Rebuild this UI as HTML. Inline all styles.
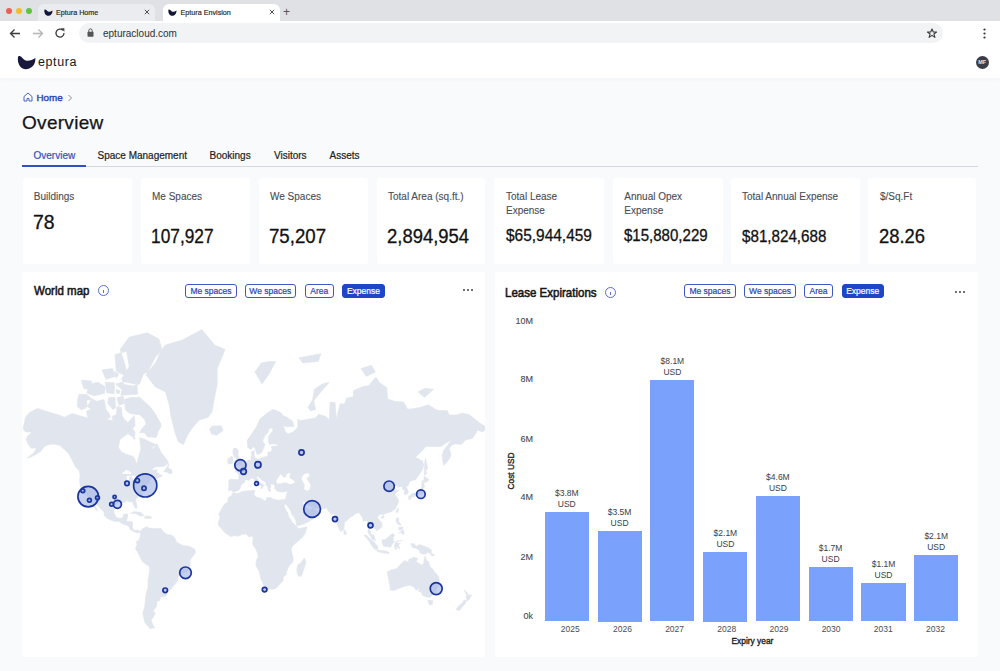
<!DOCTYPE html>
<html><head><meta charset="utf-8"><style>
*{margin:0;padding:0;box-sizing:border-box}
html,body{width:1000px;height:671px;overflow:hidden;background:#f9fafc;font-family:"Liberation Sans",sans-serif;color:#1b1b1f}
.a{position:absolute;white-space:nowrap;transform-origin:0 0}
#strip{position:absolute;left:0;top:0;width:1000px;height:21px;background:#dfe1e5}
.dot{position:absolute;top:8px;width:6.2px;height:6.2px;border-radius:50%}
.tab{position:absolute;top:4px;height:17px;border-radius:6px 6px 0 0}
.tabt{position:absolute;top:4px;font-size:7.5px;color:#1f1f22;-webkit-text-stroke:0.15px #1f1f22}
.x{position:absolute;top:2px;font-size:9px;color:#444}
#tool{position:absolute;left:0;top:21px;width:1000px;height:23px;background:#fff}
#omni{position:absolute;left:79px;top:23px;width:864px;height:20px;border-radius:10px;background:#f1f3f4}
#hdr{position:absolute;left:0;top:44px;width:1000px;height:34px;background:#fff;box-shadow:0 2px 5px rgba(0,0,0,0.02)}
.card{position:absolute;top:178px;height:86px;background:#fff;border-radius:3px}
.panel{position:absolute;top:272px;height:385px;background:#fff;border-radius:3px}
.info{position:absolute;width:11px;height:11px;border:1px solid #5a70c9;border-radius:50%}
.info:after{content:"";position:absolute;left:4px;top:4px;width:1px;height:3px;background:#5a70c9}
.btn{position:absolute;top:284px;height:14px;border:1px solid #3d58c2;border-radius:3px;font-size:8.5px;line-height:12px;color:#2a44b3;text-align:center;white-space:nowrap;-webkit-text-stroke:0.2px #2a44b3}
.btn.on{background:#1e46c6;border-color:#1e46c6;color:#fff;-webkit-text-stroke:0.2px #fff}
.more{position:absolute;font-size:10px;color:#333;letter-spacing:0.5px}
.bar{position:absolute;background:#7aa1fb}
.dl{position:absolute;width:60px;text-align:center;font-size:8.5px;line-height:11px;color:#3a3d45}
.yr{position:absolute;width:40px;text-align:center;font-size:8.5px;color:#4a4d55}
.tk{position:absolute;left:503px;width:30px;text-align:right;font-size:9px;color:#44474f;-webkit-text-stroke:0.1px #44474f}
</style></head><body>
<div id="strip"></div>
<div class="dot" style="left:6.1px;background:#ec5f57"></div>
<div class="dot" style="left:15.9px;background:#f2bc2f"></div>
<div class="dot" style="left:25.9px;background:#5fc43f"></div>
<div class="tab" style="left:38px;width:117px;background:#eaecef"></div>
<div class="tab" style="left:163px;width:117px;background:#fff"></div>
<svg class="a" style="left:44px;top:8.5px" width="9" height="7" viewBox="0 0 9 7"><path d="M0.4,0.9C0.7,0.2 1.6,0.3 2.3,1.1C3,1.9 3.7,2.6 4.6,2.7C6,2.8 7.3,2.1 8.5,1.4C8.7,4.4 6.7,6.7 4.1,6.7C1.8,6.7 0,4.2 0.4,0.9Z" fill="#14163a"/></svg>
<div class="tabt" style="left:56px;top:8px;font-size:7.2px">Eptura Home</div>
<svg class="a" style="left:144px;top:9px" width="6" height="6" viewBox="0 0 6 6"><path d="M0.8,0.8L5.2,5.2M5.2,0.8L0.8,5.2" stroke="#3c3c3c" stroke-width="0.9"/></svg>
<svg class="a" style="left:168px;top:8.5px" width="9" height="7" viewBox="0 0 9 7"><path d="M0.4,0.9C0.7,0.2 1.6,0.3 2.3,1.1C3,1.9 3.7,2.6 4.6,2.7C6,2.8 7.3,2.1 8.5,1.4C8.7,4.4 6.7,6.7 4.1,6.7C1.8,6.7 0,4.2 0.4,0.9Z" fill="#14163a"/></svg>
<div class="tabt" style="left:180.5px;top:8px;font-size:7.2px">Eptura Envision</div>
<svg class="a" style="left:269px;top:9px" width="6" height="6" viewBox="0 0 6 6"><path d="M0.8,0.8L5.2,5.2M5.2,0.8L0.8,5.2" stroke="#3c3c3c" stroke-width="0.9"/></svg>
<div class="x" style="left:283px;top:5px;font-size:12px;color:#555">+</div>
<div id="tool"></div>
<svg class="a" style="left:9px;top:28px" width="12" height="11" viewBox="0 0 12 11"><path d="M11,5.5H1.5M5.5,1.5L1.5,5.5L5.5,9.5" stroke="#3c3c3c" stroke-width="1.3" fill="none"/></svg>
<svg class="a" style="left:32px;top:28px" width="12" height="11" viewBox="0 0 12 11"><path d="M1,5.5H10.5M6.5,1.5L10.5,5.5L6.5,9.5" stroke="#b5b5b5" stroke-width="1.3" fill="none"/></svg>
<svg class="a" style="left:54px;top:27px" width="12" height="12" viewBox="0 0 12 12"><path d="M10,6A4,4 0 1 1 8.8,3.2" stroke="#3c3c3c" stroke-width="1.3" fill="none"/><path d="M6.8,1.2H10.4V4.8Z" fill="#3c3c3c"/></svg>
<div id="omni"></div>
<svg class="a" style="left:87px;top:28px" width="7" height="9" viewBox="0 0 7 9"><rect x="0.5" y="3.8" width="6" height="5" rx="0.8" fill="#555"/><path d="M1.8,4V2.6A1.7,1.7 0 0 1 5.2,2.6V4" stroke="#555" stroke-width="1" fill="none"/></svg>
<div class="a" style="left:103px;top:27.5px;font-size:10px;color:#303134">epturacloud.com</div>
<svg class="a" style="left:926px;top:27.5px" width="12" height="11" viewBox="0 0 12 11"><path d="M6,0.9L7.3,4H10.6L7.9,6L8.9,9.4L6,7.4L3.1,9.4L4.1,6L1.4,4H4.7Z" fill="none" stroke="#3c3c3c" stroke-width="1.1" stroke-linejoin="round"/></svg>
<svg class="a" style="left:983px;top:28px" width="3" height="11" viewBox="0 0 3 11"><circle cx="1.5" cy="1.5" r="1.1" fill="#333"/><circle cx="1.5" cy="5.5" r="1.1" fill="#333"/><circle cx="1.5" cy="9.5" r="1.1" fill="#333"/></svg>
<div id="hdr"></div>
<svg class="a" style="left:16.5px;top:55px" width="20" height="15" viewBox="0 0 20 15"><path d="M1,1.8C1.5,0.5 3.5,0.8 5,2.5C6.5,4.2 8,5.6 10,5.8C13,6 16,4.5 18.4,3C18.8,9.5 14.5,14.2 8.8,14.2C3.8,14.2 0,9 1,1.8Z" fill="#17183b"/></svg>
<div class="a" style="left:38px;top:54.5px;font-size:12.5px;color:#161618;letter-spacing:0.6px">eptura</div>
<div class="a" style="left:975.5px;top:55.8px;width:13.4px;height:13.4px;border-radius:50%;background:#3a3d45;color:#e8e8ea;font-size:5.5px;line-height:13.4px;text-align:center;font-weight:bold">MF</div>
<svg class="a" style="left:23px;top:92px" width="10" height="10" viewBox="0 0 10 10"><path d="M1,4.5L5,1L9,4.5V9H6V6.5H4V9H1Z" stroke="#4a66c9" stroke-width="1" fill="none" stroke-linejoin="round"/></svg>
<div class="a" style="left:36.5px;top:91.6px;font-size:9.8px;color:#2a46b4;-webkit-text-stroke:0.4px #2a46b4">Home</div>
<svg class="a" style="left:67px;top:93.5px" width="6" height="8" viewBox="0 0 6 8"><path d="M1.5,1L4.5,4L1.5,7" stroke="#8a8d95" stroke-width="1" fill="none"/></svg>
<div class="a" style="left:22px;top:112px;font-size:19px;color:#141416;letter-spacing:0.3px;-webkit-text-stroke:0.25px #141416">Overview</div>
<div class="a" style="left:33.5px;top:150px;font-size:10px;color:#3450c0;-webkit-text-stroke:0.2px #3450c0">Overview</div>
<div class="a" style="left:97.5px;top:150px;font-size:10px;color:#222;-webkit-text-stroke:0.2px #222">Space Management</div>
<div class="a" style="left:209.5px;top:150px;font-size:10px;color:#222;-webkit-text-stroke:0.2px #222">Bookings</div>
<div class="a" style="left:274px;top:150px;font-size:10px;color:#222;-webkit-text-stroke:0.2px #222">Visitors</div>
<div class="a" style="left:329.5px;top:150px;font-size:10px;color:#222;-webkit-text-stroke:0.2px #222">Assets</div>
<div class="a" style="left:22px;top:165.5px;width:956px;height:1px;background:#d5d8de"></div>
<div class="a" style="left:22px;top:164.5px;width:64px;height:2px;background:#3450c0"></div>
<div class="card" style="left:22.5px;width:109.5px"></div><div class="card" style="left:141px;width:109px"></div><div class="card" style="left:258.5px;width:109.5px"></div><div class="card" style="left:376.5px;width:108.5px"></div><div class="card" style="left:494px;width:110px"></div><div class="card" style="left:612.5px;width:110.5px"></div><div class="card" style="left:731px;width:129px"></div><div class="card" style="left:868px;width:108px"></div>
<div class="a " style="left:33.75px;top:190px;font-size:10px;line-height:13.5px;color:#474c57;-webkit-text-stroke:0.1px #474c57">Buildings</div><div class="a " style="left:32.73px;top:212.27px;font-size:20px;line-height:20px;color:#111;-webkit-text-stroke:0.3px #111;transform:scaleX(0.9705)">78</div><div class="a " style="left:152px;top:190px;font-size:10px;line-height:13.5px;color:#474c57;-webkit-text-stroke:0.1px #474c57">Me Spaces</div><div class="a " style="left:151.13px;top:226.27px;font-size:20px;line-height:20px;color:#111;-webkit-text-stroke:0.3px #111;transform:scaleX(0.8655)">107,927</div><div class="a " style="left:270px;top:190px;font-size:10px;line-height:13.5px;color:#474c57;-webkit-text-stroke:0.1px #474c57">We Spaces</div><div class="a " style="left:269.07px;top:226.27px;font-size:20px;line-height:20px;color:#111;-webkit-text-stroke:0.3px #111;transform:scaleX(0.9326)">75,207</div><div class="a " style="left:388px;top:190px;font-size:10px;line-height:13.5px;color:#474c57;-webkit-text-stroke:0.1px #474c57">Total Area (sq.ft.)</div><div class="a " style="left:387.08px;top:226.07px;font-size:20px;line-height:20px;color:#111;-webkit-text-stroke:0.3px #111;transform:scaleX(0.9220)">2,894,954</div><div class="a " style="left:506px;top:190px;font-size:10px;line-height:13.5px;color:#474c57;-webkit-text-stroke:0.1px #474c57">Total Lease<br>Expense</div><div class="a " style="left:506.00px;top:227.41px;font-size:17px;line-height:17px;color:#111;-webkit-text-stroke:0.3px #111;transform:scaleX(0.9088)">$65,944,459</div><div class="a " style="left:624.3px;top:190px;font-size:10px;line-height:13.5px;color:#474c57;-webkit-text-stroke:0.1px #474c57">Annual Opex<br>Expense</div><div class="a " style="left:624.30px;top:227.41px;font-size:17px;line-height:17px;color:#111;-webkit-text-stroke:0.3px #111;transform:scaleX(0.8843)">$15,880,229</div><div class="a " style="left:742px;top:190px;font-size:10px;line-height:13.5px;color:#474c57;-webkit-text-stroke:0.1px #474c57">Total Annual Expense</div><div class="a " style="left:742.00px;top:227.61px;font-size:17px;line-height:17px;color:#111;-webkit-text-stroke:0.3px #111;transform:scaleX(0.8928)">$81,824,688</div><div class="a " style="left:880px;top:190px;font-size:10px;line-height:13.5px;color:#474c57;-webkit-text-stroke:0.1px #474c57">$/Sq.Ft</div><div class="a " style="left:879.08px;top:226.07px;font-size:20px;line-height:20px;color:#111;-webkit-text-stroke:0.3px #111;transform:scaleX(0.9198)">28.26</div>
<div class="panel" style="left:22px;width:463px"></div>
<div class="a " style="left:33.50px;top:284px;font-size:12.5px;color:#161618;-webkit-text-stroke:0.55px #161618;transform:scaleX(0.9211)">World map</div>
<div class="info" style="left:97.5px;top:285px"></div>
<div class="btn" style="left:185px;width:52px">Me spaces</div>
<div class="btn" style="left:244.5px;width:51.5px">We spaces</div>
<div class="btn" style="left:304.5px;width:29.5px">Area</div>
<div class="btn on" style="left:342px;width:43px">Expense</div>
<svg class="a" style="left:462px;top:288px" width="12" height="4" viewBox="0 0 12 4"><circle cx="2" cy="2" r="0.95" fill="#333"/><circle cx="6" cy="2" r="0.95" fill="#333"/><circle cx="10" cy="2" r="0.95" fill="#333"/></svg>
<svg class="a" style="left:22px;top:272px" width="463" height="385" viewBox="22 272 463 385">
<path d="M23.0,428.7L25.4,417.6L29.5,412.4L37.5,408.4L43.8,410.4L52.8,413.2L58.0,414.7L64.5,417.2L72.2,413.5L78.7,415.4L85.2,417.2L91.7,419.0L98.2,420.8L104.6,419.0L113.7,420.8L117.6,415.4L124.0,419.0L127.9,422.5L134.4,415.4L135.1,425.8L130.5,430.5L127.9,433.5L120.2,439.2L118.2,447.1L121.5,452.0L126.6,454.4L133.8,456.7L137.0,464.2L138.3,457.8L140.9,449.6L139.6,437.8L144.8,439.2L149.9,442.0L156.4,444.6L151.2,448.4L153.2,448.9L157.1,443.8L161.6,453.2L166.8,459.5L168.5,463.2L164.2,466.3L156.4,466.9L154.5,467.3L151.2,470.3L157.1,469.7L156.4,472.2L161.6,475.6L162.9,475.1L161.3,476.5L155.1,479.1L153.8,477.3L150.6,479.1L149.0,481.2L149.9,482.6L147.4,484.0L144.8,484.8L144.8,486.5L142.8,488.2L142.2,490.7L142.8,493.1L140.9,494.6L138.3,497.0L135.7,498.8L136.4,503.8L137.0,506.7L136.4,508.6L134.7,507.4L133.4,504.5L132.5,501.8L130.5,502.1L126.6,500.9L124.7,501.5L125.1,502.7L122.8,502.3L118.9,502.1L114.7,504.8L114.3,508.8L113.9,512.4L115.6,516.5L118.2,518.3L122.8,517.9L123.4,514.5L127.9,513.8L127.3,517.9L126.0,521.3L131.8,521.4L132.7,522.6L132.5,528.0L134.4,530.6L137.6,529.9L140.2,531.3L140.5,532.6L138.3,532.6L136.4,532.8L133.1,531.3L129.9,529.3L129.2,527.3L127.3,525.3L122.8,524.1L118.9,521.3L115.6,521.7L111.7,520.6L107.2,518.3L104.0,515.2L104.2,512.4L100.7,508.8L95.6,503.0L92.3,500.0L91.9,501.5L94.9,506.0L98.2,511.4L95.6,509.3L93.0,505.2L91.7,502.3L89.3,498.5L87.1,495.4L84.4,494.5L82.7,491.3L82.0,489.4L80.3,486.0L79.6,482.3L80.0,475.1L79.1,470.5L81.3,470.3L78.7,467.3L74.8,465.3L71.6,458.9L68.4,453.2L64.5,449.6L59.9,445.4L54.1,444.1L48.9,444.6L44.4,446.4L41.2,450.8L36.0,454.4L30.8,457.1L27.2,457.8L33.4,453.2L36.6,448.1L30.8,448.1L27.6,443.3L26.3,439.2L27.6,435.9L32.1,432.0L25.6,432.0ZM81.3,380.0L91.7,381.1L90.4,388.8L83.9,388.8ZM105.3,382.3L114.3,382.8L114.3,393.8L106.6,392.8ZM116.3,389.3L120.2,390.8L119.5,393.8L116.3,392.8ZM116.9,397.6L123.4,396.2L124.0,403.4L118.9,405.6ZM112.4,416.1L116.3,414.7L117.6,419.0L112.4,419.7ZM102.0,370.0L112.4,368.6L115.0,376.4L105.9,379.4ZM113.7,371.3L118.9,373.9L116.3,378.2ZM113.7,420.8L116.3,416.1L116.9,406.4L121.5,407.6L122.1,415.4L124.0,419.0L118.9,422.5ZM132.5,436.7L135.7,438.4L133.8,439.2ZM163.8,472.0L168.7,464.0L168.3,468.3L171.3,469.3L172.4,472.2L171.2,473.7L168.3,473.2L166.8,472.0ZM74.5,465.7L78.7,467.3L80.9,470.5L78.1,469.5ZM124.0,399.5L130.5,397.6L139.6,397.2L144.8,402.1L149.9,406.4L153.8,411.6L156.4,415.8L161.0,424.1L161.0,427.1L158.4,430.5L157.1,435.3L155.8,437.8L152.5,437.0L148.0,437.0L144.1,432.6L139.6,432.9L141.5,429.0L146.1,424.1L144.8,419.7L139.6,414.7L135.1,414.3L131.8,413.9L128.6,412.8L125.6,409.7ZM86.5,400.4L93.0,399.0L96.2,401.3L104.0,399.5L105.9,408.9L109.2,413.5L110.5,417.2L104.6,419.7L94.3,420.8L87.8,417.2L86.5,411.6L91.0,408.9L87.1,406.4ZM77.4,406.8L81.3,409.7L85.2,408.4L89.1,403.4L91.7,398.6L86.5,394.3L79.0,394.3L77.4,401.3ZM124.0,384.5L133.1,386.1L139.6,384.0L143.5,373.9L148.7,371.3L156.4,361.5L161.6,348.5L159.0,339.1L147.4,332.8L129.2,337.1L120.2,349.4L124.0,361.5L126.6,371.3L121.5,378.8ZM115.6,384.0L124.0,381.7L137.0,384.5L137.6,394.3L120.8,395.3L122.1,389.8ZM87.8,384.5L98.2,382.3L105.3,386.7L104.6,393.3L94.3,395.8L87.1,393.3ZM108.5,397.6L115.0,397.2L115.6,407.6L113.0,409.7L107.9,403.4ZM115.0,354.5L126.6,351.2L129.2,366.6L124.0,375.1L116.3,371.3ZM128.6,429.0L131.8,427.4L135.1,432.0L134.4,437.3L129.2,435.0L127.9,432.6ZM146.1,375.1L155.1,357.7L165.5,344.9L182.3,340.1L201.8,329.5L214.7,344.9L225.1,349.4L217.3,368.6L217.3,384.0L214.7,396.7L212.1,411.6L208.2,417.2L199.2,420.1L191.4,429.0L186.2,437.8L183.6,444.6L178.4,442.0L175.2,433.5L173.3,425.8L170.7,415.4L169.4,405.6L165.5,391.9L155.1,386.7ZM209.5,429.0L212.1,426.1L221.2,425.8L223.1,430.5L216.6,435.3L211.5,434.1ZM140.2,531.3L142.8,528.6L147.4,526.6L148.0,528.0L152.5,528.6L157.7,528.5L161.0,528.6L162.9,531.3L166.8,534.5L172.0,535.2L173.9,537.1L175.8,540.0L176.5,542.3L183.0,545.5L189.4,546.2L195.0,549.4L195.5,552.7L192.7,556.6L190.1,559.9L190.1,565.6L187.5,571.5L183.0,572.9L178.4,576.5L177.5,580.8L173.3,586.1L171.3,589.2L168.1,590.6L164.8,590.0L166.8,593.1L166.1,595.9L160.3,597.2L159.9,600.6L156.4,601.5L157.1,603.2L155.8,607.7L153.2,610.5L155.4,613.3L151.2,620.4L151.9,622.5L154.5,627.9L149.9,628.4L144.8,622.5L142.8,613.3L144.8,605.9L145.4,598.9L146.1,593.9L148.0,587.6L148.0,580.1L149.3,572.9L149.7,566.7L143.5,562.6L141.5,559.9L137.6,552.0L135.4,548.8L137.0,544.9L136.4,541.7L138.6,540.4L140.2,537.1L140.5,533.2ZM228.3,490.7L228.9,487.4L228.7,480.5L230.2,479.3L238.7,479.8L239.0,475.1L237.4,472.6L234.8,471.3L238.7,469.9L240.6,468.3L242.8,465.5L245.8,464.2L247.1,460.6L251.0,460.0L251.7,455.5L251.2,452.0L254.2,450.6L254.2,456.7L256.1,458.4L258.7,458.9L263.9,457.1L267.8,456.2L267.8,452.0L271.0,452.0L272.2,448.6L271.0,446.6L276.9,445.9L278.8,444.6L273.0,443.8L269.7,444.6L268.4,442.0L268.4,436.4L273.0,430.5L272.3,428.0L269.1,428.3L268.3,432.0L264.7,435.9L262.6,441.1L264.9,444.6L262.0,452.0L259.4,454.1L257.0,454.4L254.8,447.4L252.9,447.1L251.0,449.6L247.7,447.4L247.1,440.6L251.0,435.0L256.1,427.4L260.0,419.0L266.5,413.5L273.0,409.3L280.7,412.4L283.3,415.8L287.2,417.2L293.0,421.8L293.7,426.4L285.9,426.8L283.3,425.1L285.3,432.0L288.5,433.8L293.0,432.0L297.6,427.4L297.8,419.0L300.2,420.8L309.2,419.0L315.7,418.0L318.3,414.3L326.1,416.5L329.3,420.1L330.0,402.1L335.1,402.6L336.4,419.0L340.3,403.4L344.2,404.3L346.8,398.1L353.3,396.7L353.3,390.8L362.3,386.7L368.8,385.6L375.9,377.0L379.2,382.3L386.9,387.7L387.6,399.0L394.7,401.3L403.8,402.1L407.3,408.9L411.5,408.9L420.6,407.2L428.4,404.7L434.9,408.9L438.1,410.4L447.2,410.4L449.1,415.0L456.9,415.0L461.4,413.2L468.5,414.3L473.7,418.0L478.9,422.5L484.1,425.8L487.3,427.4L482.8,432.0L477.6,429.9L476.3,432.6L472.4,438.4L465.9,439.8L461.1,444.6L455.6,443.8L452.3,444.8L449.1,448.4L451.0,453.9L450.0,457.8L447.8,461.1L445.6,463.6L443.5,465.3L442.0,455.5L443.9,450.1L451.7,439.8L447.8,442.0L440.7,446.6L436.1,446.6L426.0,446.4L422.5,450.3L415.4,457.3L418.7,458.9L422.5,461.1L423.7,465.3L422.2,470.3L415.7,479.6L410.2,481.2L408.6,484.0L408.3,485.7L405.7,486.5L407.0,488.5L408.2,491.5L408.0,493.5L405.1,494.5L404.2,494.5L404.5,489.8L402.5,489.4L402.1,486.2L398.8,486.9L397.6,487.7L398.1,484.8L395.4,486.0L393.4,487.0L393.0,488.0L394.7,490.3L399.2,490.0L396.4,492.3L395.0,494.2L397.2,497.8L398.5,500.2L398.6,501.8L397.9,503.8L396.3,506.4L395.4,508.6L391.5,511.7L387.6,512.8L383.7,514.2L383.0,515.4L381.8,513.8L378.6,515.2L377.9,516.5L377.5,517.9L379.2,520.0L381.5,522.2L382.1,525.3L381.8,527.3L379.2,528.9L376.6,531.1L376.3,529.5L374.0,528.6L372.7,526.0L370.7,524.7L369.2,528.6L370.5,531.5L370.9,533.9L374.0,535.2L374.6,537.1L375.5,540.5L374.5,540.6L371.8,538.9L370.6,536.5L367.9,532.2L368.2,529.3L368.4,524.7L366.9,520.6L363.0,521.2L362.6,517.5L360.1,514.5L359.1,512.4L355.9,513.4L352.6,515.9L350.7,516.8L347.0,520.6L344.6,522.0L344.2,525.3L343.9,528.9L341.0,531.8L339.7,529.9L338.4,527.3L337.1,523.3L335.5,519.3L334.9,516.5L334.7,514.1L331.9,514.5L329.7,512.5L328.0,510.6L326.8,508.3L321.5,508.6L314.8,507.7L313.6,506.1L311.2,506.5L307.3,504.8L305.5,501.4L303.7,501.5L302.8,502.6L303.4,504.5L305.6,507.1L307.3,508.8L307.4,509.8L310.5,510.1L313.4,507.1L313.8,509.4L316.4,510.8L318.0,512.4L316.4,515.2L315.3,517.2L312.2,519.5L308.2,521.8L303.7,524.0L298.9,525.6L296.9,525.7L295.8,522.0L296.0,520.6L294.0,517.2L291.2,513.1L290.5,510.4L288.5,507.7L286.2,504.5L285.4,504.2L284.9,504.9L283.7,503.9L282.8,501.5L282.4,499.7L285.0,499.6L285.9,497.3L286.6,494.6L287.2,492.6L287.2,491.0L284.6,491.8L282.0,492.1L279.4,491.8L277.1,491.1L275.8,489.8L274.7,488.5L274.9,486.5L274.5,485.2L274.3,484.3L271.7,484.3L270.1,484.8L271.0,486.5L269.7,488.7L270.6,489.4L270.4,491.5L268.7,491.0L268.1,489.4L267.8,487.0L265.9,484.8L265.9,482.6L264.6,481.4L261.3,479.6L260.0,478.4L258.3,476.7L256.5,476.2L256.5,477.8L258.1,479.4L259.4,482.3L261.3,483.3L264.6,485.4L262.9,486.7L262.1,488.4L260.9,488.7L261.1,485.7L258.7,484.0L256.8,483.3L254.8,481.4L253.8,478.9L252.0,478.0L250.3,479.1L248.4,480.3L246.4,479.8L244.5,480.5L244.7,482.4L241.9,484.0L240.6,486.4L240.0,488.7L237.8,491.1L234.8,491.3L233.3,492.3L232.3,491.0L230.9,490.3L228.9,490.7ZM233.2,467.3L236.7,466.1L242.4,464.9L242.8,461.7L240.9,460.0L238.7,456.7L238.0,454.4L238.3,450.6L236.1,448.1L234.1,448.1L232.8,450.8L233.2,454.4L234.3,457.1L236.7,458.9L236.7,460.4L234.6,460.6L235.2,462.8L233.9,463.8L236.7,464.2ZM232.8,463.2L232.6,460.0L233.3,457.6L231.5,456.0L229.6,457.8L227.7,458.9L227.9,463.2L230.0,464.0ZM233.0,492.6L238.0,493.7L241.9,491.5L247.1,491.0L253.3,490.2L254.8,490.7L253.9,494.6L255.5,496.7L260.4,498.2L265.2,501.1L266.5,499.7L266.5,497.8L270.4,497.6L273.0,499.1L278.2,500.2L282.4,499.7L282.8,501.7L284.0,505.2L285.9,510.3L287.9,513.1L288.9,517.5L290.6,518.9L292.0,522.2L294.3,524.3L296.5,526.1L298.2,528.8L302.8,527.7L306.9,526.8L306.6,528.8L304.8,533.9L302.8,536.9L299.5,539.7L295.6,543.3L292.8,545.8L291.4,548.4L291.5,551.8L292.9,556.6L293.0,562.0L289.2,565.7L286.3,572.2L286.6,574.3L283.3,576.9L283.1,580.8L280.7,583.1L276.9,587.6L273.6,589.2L269.7,589.0L266.5,590.4L264.4,589.2L263.9,585.3L260.7,578.6L259.4,572.2L255.9,565.3L256.5,559.9L258.3,556.4L257.4,553.3L256.4,550.1L252.5,544.2L253.0,539.1L253.0,537.1L251.6,536.3L248.4,536.7L246.4,534.1L243.2,534.1L238.0,536.1L234.8,535.6L230.9,536.6L225.7,533.3L223.4,531.0L221.2,528.1L218.8,526.0L218.1,523.1L219.5,519.1L219.8,516.1L218.6,514.5L221.2,509.6L223.8,504.9L227.9,501.8L228.2,497.8L231.5,495.7ZM304.4,558.0L305.9,562.6L304.8,566.0L302.8,572.2L301.5,575.8L298.9,576.5L297.2,573.6L296.9,568.7L298.1,564.6L300.8,563.0L302.8,559.9ZM343.9,529.5L345.8,531.3L346.5,533.2L345.5,534.5L344.2,534.5L343.8,531.9ZM408.9,499.7L410.2,499.6L411.5,497.0L415.7,495.9L417.8,495.0L420.6,494.0L422.9,492.7L423.1,489.0L424.5,486.5L423.8,483.3L421.9,483.1L421.8,484.8L421.9,487.0L420.9,489.0L418.4,490.8L417.4,491.9L416.7,492.9L413.1,493.1L410.9,494.5L410.1,495.4L408.6,496.7ZM421.9,483.1L423.5,482.6L426.2,482.3L429.0,480.0L427.7,478.5L424.2,476.0L424.0,479.6L421.9,481.4ZM424.5,475.1L426.4,474.1L425.8,468.9L427.7,469.3L425.5,458.2L424.7,462.1ZM396.1,511.7L397.3,508.4L398.6,508.8L397.9,511.7L397.0,513.2ZM381.2,517.2L383.7,515.7L384.3,516.5L383.0,518.3L381.2,517.9ZM396.0,520.6L396.8,517.9L398.8,517.9L398.6,521.3L401.2,525.3L399.2,524.7L397.3,523.7ZM398.6,533.2L403.1,529.7L404.4,532.8L403.1,534.8L400.7,532.2ZM398.6,527.3L403.1,526.9L402.5,529.3L399.9,530.2L398.6,529.3ZM381.8,540.4L382.5,539.6L384.3,540.0L386.9,538.2L390.0,535.6L392.4,533.2L393.4,534.5L395.1,535.4L393.4,536.7L393.2,541.0L394.7,541.3L392.8,543.3L391.5,545.5L390.8,547.2L388.9,546.8L385.0,546.2L383.3,546.1L382.4,543.6ZM364.0,535.0L366.9,535.6L370.5,539.3L374.8,542.8L375.9,544.6L377.9,546.4L377.6,549.8L375.9,550.0L373.1,547.5L370.5,543.6L368.5,540.1L366.2,537.8ZM376.8,551.1L377.9,550.1L381.1,550.7L384.3,550.6L386.4,551.3L388.9,552.3L388.9,553.6L384.3,553.0L380.5,552.4ZM395.4,549.4L396.5,549.4L397.0,545.7L398.6,548.4L399.9,547.9L397.9,544.8L400.5,543.6L397.9,543.3L396.0,541.7L401.8,540.6L402.5,540.4L397.9,541.0L395.7,542.2L394.4,545.9ZM410.2,544.0L414.1,543.5L416.1,546.6L419.3,544.5L423.2,545.7L428.4,547.9L431.6,550.3L431.0,552.4L432.9,554.0L434.9,555.7L431.6,555.6L429.7,553.0L427.1,552.3L426.2,554.0L424.5,554.3L420.0,553.1L419.3,550.1L415.4,548.0L412.6,547.6L411.5,545.9L413.5,545.1ZM387.2,571.5L388.2,577.2L389.5,583.8L390.4,588.4L389.5,589.6L393.4,590.7L397.3,588.9L401.2,587.6L403.8,586.5L407.7,585.5L410.5,585.3L414.1,587.2L416.3,590.4L418.9,587.6L418.7,591.5L421.3,591.9L422.7,595.6L426.4,596.9L430.1,597.2L432.3,595.2L434.9,594.6L435.1,591.9L436.5,588.9L438.7,585.3L439.4,580.1L438.7,576.5L436.1,573.6L434.2,571.9L432.9,569.2L430.1,567.1L429.0,563.3L428.8,561.8L426.4,560.2L425.1,556.2L424.0,559.1L423.8,562.6L422.5,565.3L420.6,564.6L418.4,563.0L416.1,561.7L417.8,558.2L412.8,557.2L412.3,558.4L409.1,559.1L408.3,561.8L406.6,561.8L404.8,560.3L402.5,562.6L400.4,564.6L398.8,566.3L397.3,568.3L394.1,569.4L391.7,569.6L389.0,571.2ZM427.9,600.1L432.6,600.4L432.3,604.5L430.3,605.2L428.4,602.9ZM464.2,589.8L466.6,592.3L468.4,594.8L471.8,595.1L469.8,597.7L469.6,599.4L466.7,601.3L467.0,598.6L465.7,597.6L466.7,595.6ZM464.2,599.8L466.3,601.1L464.9,604.1L462.3,606.6L459.5,610.7L456.2,609.5L458.4,605.9L461.8,603.4ZM130.5,513.2L134.4,511.4L140.9,512.5L144.5,515.6L140.0,516.0L135.7,513.6ZM144.1,517.9L146.3,516.0L150.6,516.4L152.0,517.8L148.7,518.6ZM254.8,372.0L261.3,363.0L269.1,361.5L275.6,361.5L269.1,373.9L262.0,384.0L258.7,378.2ZM307.9,407.6L312.5,399.9L314.4,389.3L322.2,384.0L329.3,382.3L320.9,391.9L313.8,400.4L315.7,409.7L310.5,410.8ZM361.0,368.6L371.4,365.2L375.3,372.0L366.2,376.4ZM418.0,391.9L424.5,388.3L433.6,389.3L424.5,397.6ZM298.9,357.7L320.9,353.7L318.3,361.5L302.8,363.0Z" fill="#e1e5ed" stroke="#e1e5ed" stroke-width="0.6" stroke-linejoin="round"/>
<path d="M276.2,481.4L276.9,483.6L278.4,483.6L281.4,483.6L284.0,482.3L287.2,483.0L290.5,484.2L294.3,483.1L294.5,481.0L292.1,479.6L289.2,477.5L290.1,474.3L290.1,472.8L285.9,474.5L286.6,476.4L284.0,477.8L282.7,476.2L280.5,474.1L279.1,476.4L277.6,478.7ZM301.5,477.8L304.1,474.1L307.3,473.2L309.2,473.7L309.2,476.4L307.0,477.8L306.4,478.0L308.8,482.3L310.5,484.8L309.5,489.8L306.0,490.7L304.1,488.7L304.7,484.8L302.1,480.5ZM121.5,473.7L124.7,471.3L126.6,469.7L130.8,472.2L131.2,474.1L127.9,474.1ZM127.3,482.8L126.6,476.0L129.9,475.4L128.6,481.4ZM131.2,475.4L135.1,476.0L137.0,477.8L133.8,480.5ZM132.5,482.8L138.3,480.9L135.7,481.6ZM137.3,480.1L141.9,479.6L141.5,478.4L137.6,479.3Z" fill="#fff"/>
<g fill="rgba(160,178,228,0.6)" stroke="#1b35a0" stroke-width="1.7"><circle cx="88.2" cy="496.6" r="10.3"/><circle cx="82.8" cy="490.8" r="1.9"/><circle cx="89.4" cy="500.2" r="1.9"/><circle cx="97.5" cy="497.8" r="1.9"/><circle cx="145.2" cy="485.4" r="11.6"/><circle cx="137.4" cy="480.6" r="2.1"/><circle cx="144" cy="488.2" r="2.1"/><circle cx="127" cy="483.4" r="2.2"/><circle cx="114.6" cy="497" r="1.6"/><circle cx="117.4" cy="504.3" r="4.0"/><circle cx="111.6" cy="504.3" r="1.9"/><circle cx="240.4" cy="465.2" r="5.6"/><circle cx="243.5" cy="471.5" r="2.8"/><circle cx="257.9" cy="464.8" r="3.1"/><circle cx="301.5" cy="452.5" r="2.6"/><circle cx="256.5" cy="483.6" r="1.9"/><circle cx="312.1" cy="509" r="8.4"/><circle cx="335" cy="519.1" r="2.5"/><circle cx="370.5" cy="525.3" r="2.5"/><circle cx="389.1" cy="486.2" r="5.2"/><circle cx="420.9" cy="494.2" r="4.3"/><circle cx="185.5" cy="572.8" r="5.8"/><circle cx="165.2" cy="590.3" r="2.3"/><circle cx="264.6" cy="589.6" r="2.3"/><circle cx="436.2" cy="588.6" r="6.0"/></g>
</svg>
<div class="panel" style="left:494.5px;width:483.5px"></div>
<div class="a " style="left:505.08px;top:285.5px;font-size:12.5px;color:#161618;-webkit-text-stroke:0.55px #161618;transform:scaleX(0.9214)">Lease Expirations</div>
<div class="info" style="left:604.5px;top:286.5px"></div>
<div class="btn" style="left:684px;width:52px">Me spaces</div>
<div class="btn" style="left:744px;width:52px">We spaces</div>
<div class="btn" style="left:804px;width:29px">Area</div>
<div class="btn on" style="left:841.5px;width:42.5px">Expense</div>
<svg class="a" style="left:954px;top:290px" width="12" height="4" viewBox="0 0 12 4"><circle cx="2" cy="2" r="0.95" fill="#333"/><circle cx="6" cy="2" r="0.95" fill="#333"/><circle cx="10" cy="2" r="0.95" fill="#333"/></svg>
<div class="tk" style="top:316.0px">10M</div><div class="tk" style="top:374.4px">8M</div><div class="tk" style="top:433.8px">6M</div><div class="tk" style="top:491.6px">4M</div><div class="tk" style="top:551.6px">2M</div><div class="tk" style="top:610.9px">0k</div>
<div class="bar" style="left:544.6px;top:511.8px;width:44.3px;height:109.7px"></div><div class="dl" style="left:536.8px;top:487.7px">$3.8M<br>USD</div><div class="yr" style="left:550.3px;top:624px">2025</div><div class="bar" style="left:597.5px;top:531.0px;width:44.3px;height:90.5px"></div><div class="dl" style="left:589.6px;top:506.9px">$3.5M<br>USD</div><div class="yr" style="left:602.5px;top:624px">2026</div><div class="bar" style="left:650.2px;top:379.8px;width:44.3px;height:241.7px"></div><div class="dl" style="left:642.4px;top:355.7px">$8.1M<br>USD</div><div class="yr" style="left:654.6px;top:624px">2027</div><div class="bar" style="left:703.2px;top:552.0px;width:44.3px;height:69.5px"></div><div class="dl" style="left:695.4px;top:527.9px">$2.1M<br>USD</div><div class="yr" style="left:706.8px;top:624px">2028</div><div class="bar" style="left:755.8px;top:496.1px;width:44.3px;height:125.4px"></div><div class="dl" style="left:747.9px;top:472.0px">$4.6M<br>USD</div><div class="yr" style="left:759.0px;top:624px">2029</div><div class="bar" style="left:808.5px;top:566.8px;width:44.3px;height:54.7px"></div><div class="dl" style="left:800.6px;top:542.7px">$1.7M<br>USD</div><div class="yr" style="left:811.1px;top:624px">2030</div><div class="bar" style="left:861.4px;top:582.7px;width:44.3px;height:38.8px"></div><div class="dl" style="left:853.5px;top:558.6px">$1.1M<br>USD</div><div class="yr" style="left:863.3px;top:624px">2031</div><div class="bar" style="left:914.1px;top:555.4px;width:44.3px;height:66.1px"></div><div class="dl" style="left:906.2px;top:531.3px">$2.1M<br>USD</div><div class="yr" style="left:915.5px;top:624px">2032</div>
<div class="a" style="left:505px;top:465.5px;font-size:8.3px;color:#1d1d20;-webkit-text-stroke:0.35px #1d1d20;transform:rotate(-90deg);transform-origin:center;width:40px;text-align:center;margin-left:-14px">Cost USD</div>
<div class="a" style="left:731.5px;top:635.8px;font-size:8.4px;color:#1d1d20;-webkit-text-stroke:0.35px #1d1d20">Expiry year</div>
</body></html>
